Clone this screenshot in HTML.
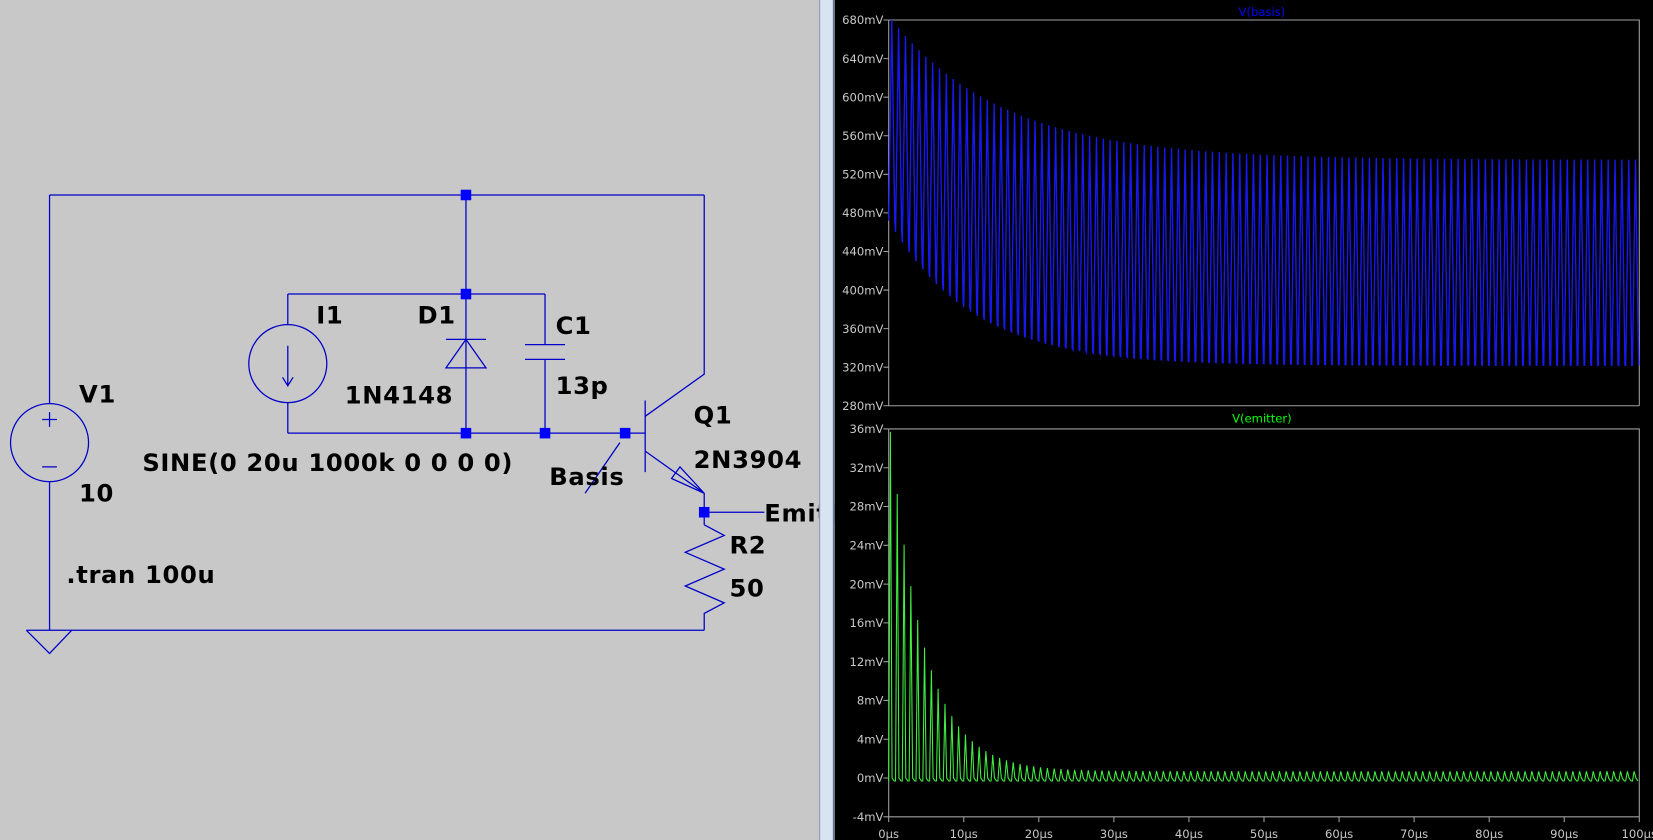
<!DOCTYPE html>
<html><head><meta charset="utf-8"><style>
html,body{margin:0;padding:0;background:#c8c8c8;overflow:hidden}
svg{display:block}
.l{font-family:"DejaVu Sans",sans-serif;font-weight:bold;font-size:23px;fill:#000;letter-spacing:0.6px}
.t{font-family:"DejaVu Sans",sans-serif;font-size:11px;fill:#c8c8c8}
</style></head><body>
<svg id="s" width="1653" height="840" viewBox="0 0 1568 797" preserveAspectRatio="none" xmlns="http://www.w3.org/2000/svg">
<rect x="0" y="0" width="778" height="797" fill="#c8c8c8"/>
<g stroke="#0000c8" stroke-width="1.2" fill="none">
<path d="M47 185H668M442 185V279M273 279H517M273 279V308M273 382V411M273 411H593M442 279V411M517 279V327M498 327H536M498 341H536M517 341V411"/>
<path d="M47 185V383M47 457V598M25 598H668M25 598L47 620L68 598"/>
<circle cx="47" cy="420" r="37"/><circle cx="273" cy="345" r="37"/>
<path d="M40 398H54M47 391V405M40 443H54"/>
<path d="M273 328V365M268 358L273 366L278 358"/>
<path d="M423 349H461L442 322ZM423 322H461"/>
<path d="M593 411H612M612 380V448M612 395L668 355V185M612 428L668 468V498M637 454L645 443L668 468ZM668 486H725"/>
<path d="M668 498L687 508L650 524L687 540L650 556L687 572L668 582V598"/>
<path d="M555 468L588 420"/>
</g>
<g fill="#0000ff">
<rect x="437" y="180" width="10" height="10"/><rect x="437" y="274" width="10" height="10"/>
<rect x="437" y="406" width="10" height="10"/><rect x="512" y="406" width="10" height="10"/>
<rect x="588" y="406" width="10" height="10"/><rect x="663" y="481" width="10" height="10"/>
</g>
<g class="l">
<text x="75" y="382">V1</text><text x="75" y="476">10</text>
<text x="300" y="307">I1</text><text x="396" y="307">D1</text>
<text x="327" y="383">1N4148</text><text x="527" y="317">C1</text><text x="527" y="374">13p</text>
<text x="658" y="402">Q1</text><text x="658" y="444">2N3904</text>
<text x="135" y="447">SINE(0 20u 1000k 0 0 0 0)</text>
<text x="521" y="460">Basis</text><text x="725" y="495">Emitter</text>
<text x="692" y="525">R2</text><text x="692" y="566">50</text>
<text x="63" y="553">.tran 100u</text>
</g>
<rect x="777" y="0" width="14" height="797" fill="#d8e4f2"/>
<rect x="777" y="0" width="1" height="797" fill="#8898b0"/>
<rect x="790" y="0" width="2" height="797" fill="#6a7a90"/>
<rect x="792" y="0" width="776" height="797" fill="#000"/>
<text x="1197" y="15" text-anchor="middle" font-family="DejaVu Sans,sans-serif" font-size="11" fill="#0000ff">V(basis)</text>
<text x="1197" y="401" text-anchor="middle" font-family="DejaVu Sans,sans-serif" font-size="11" fill="#00ff00">V(emitter)</text>
<g id="ax" stroke="#a0a0a0" stroke-width="1" fill="none">
<path d="M843 19H1555V385M843 19V385H1555M843 407H1555V775M843 407V775H1555"/>
</g>
<path id="p1" stroke="#1818f0" stroke-width="1.3" fill="none"/>
<path id="p2" stroke="#40f040" stroke-width="1" fill="none"/>
<g id="tk" class="t"></g>
</svg>
<script>
var ns="http://www.w3.org/2000/svg",tk=document.getElementById('tk'),ax=document.getElementById('ax');
function T(x,y,s,a){var e=document.createElementNS(ns,'text');e.setAttribute('x',x);e.setAttribute('y',y);e.setAttribute('text-anchor',a);e.textContent=s;tk.appendChild(e);}
var d='';
for(var i=0;i<=10;i++){var v=680-40*i,y=19+i*36.6;T(838,y+4,v+'mV','end');d+='M838 '+y+'H843';}
for(var i=0;i<=10;i++){var v=36-4*i,y=407+i*36.8;T(838,y+4,v+'mV','end');d+='M838 '+y+'H843';}
for(var i=0;i<=10;i++){var x=843+71.2*i;T(x,795,(10*i)+'\u00b5s','middle');d+='M'+x+' 775V780';}
var pe=document.createElementNS(ns,'path');pe.setAttribute('d',d);ax.appendChild(pe);
var a='',b='',N=110,W=712;
for(var c=0;c<N;c++){var t=c*100/N;var x0=843+c*W/N,w=W/N;
 var hi=535+145*Math.exp(-t/15),lo=322+150*Math.exp(-t/11);
 var yh=19+(680-hi)*0.915,yl=19+(680-lo)*0.915;
 a+=(c==0?'M':'L')+x0.toFixed(1)+' '+yl.toFixed(1)+'L'+(x0+w*0.45).toFixed(1)+' '+yh.toFixed(1)+'L'+(x0+w*0.9).toFixed(1)+' '+yl.toFixed(1);
 var pk=0.7+35*Math.exp(-t/4.5),y0=407+36*9.2,yp=407+(36-pk)*9.2,ym=407+(36+0.3)*9.2;
 b+=(c==0?'M':'L')+x0.toFixed(1)+' '+ym.toFixed(1)+'L'+(x0+w*0.25).toFixed(1)+' '+yp.toFixed(1)+'L'+(x0+w*0.5).toFixed(1)+' '+y0.toFixed(1)+'L'+(x0+w*0.8).toFixed(1)+' '+ym.toFixed(1);
}
document.getElementById('p1').setAttribute('d',a);document.getElementById('p2').setAttribute('d',b);
</script>
</body></html>
